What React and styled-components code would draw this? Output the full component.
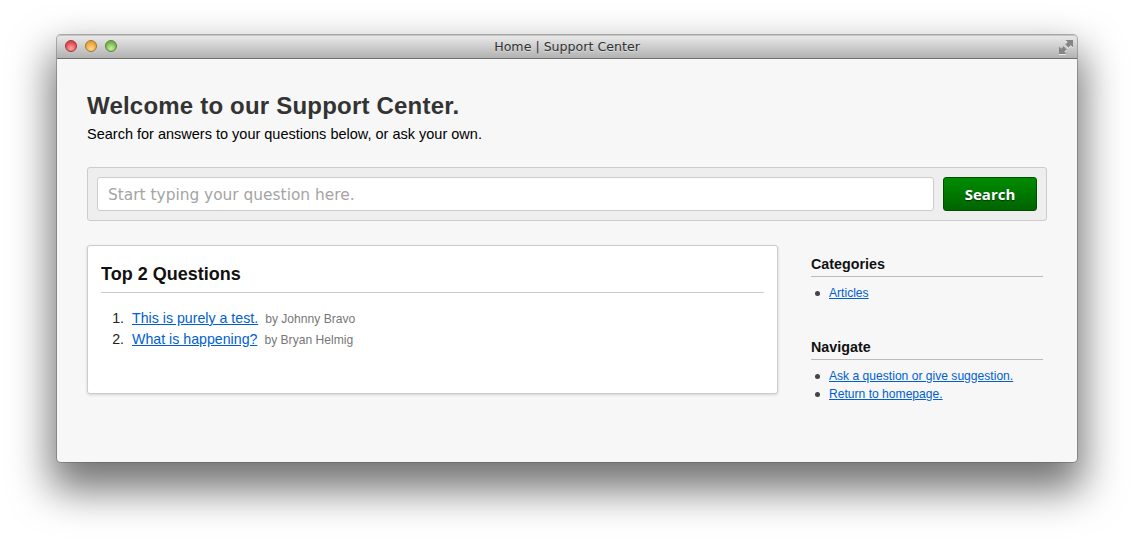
import React from "react";
import styled, { createGlobalStyle } from "styled-components";

const GlobalStyle = createGlobalStyle`
  html, body {
    margin: 0;
    padding: 0;
    background: #ffffff;
  }
  body {
    font-family: "Liberation Sans", Arial, sans-serif;
    overflow: hidden;
  }
`;

const Page = styled.div`
  width: 1134px;
  height: 541px;
  padding: 35px 0 0 57px;
  box-sizing: border-box;
  overflow: hidden;
`;

const Window = styled.div`
  width: 1020px;
  height: 427px;
  display: flex;
  flex-direction: column;
  border-radius: 4px;
  background: #f7f7f7;
  box-shadow: 0 0 0 1px rgba(90, 90, 90, 0.45), 0 22px 40px 6px rgba(0, 0, 0, 0.55);
`;

const TitleBar = styled.div`
  position: relative;
  flex: 0 0 24px;
  height: 24px;
  box-sizing: border-box;
  display: flex;
  align-items: center;
  justify-content: center;
  border-top: 1px solid #c4c4c4;
  border-bottom: 1px solid #6f6f6f;
  border-radius: 4px 4px 0 0;
  background: linear-gradient(#e8e8e8, #b2b2b2);
`;

const Lights = styled.div`
  position: absolute;
  left: 8px;
  top: 4px;
  display: flex;
  gap: 8px;
`;

const Light = styled.span`
  width: 12px;
  height: 12px;
  box-sizing: border-box;
  border-radius: 50%;
  border: 1px solid ${(props) => props.edge};
  background: radial-gradient(circle at 50% 75%, ${(props) => props.glow}, ${(props) => props.base} 70%);
`;

const WindowTitle = styled.span`
  margin-top: -2px;
  font-family: "DejaVu Sans", sans-serif;
  font-size: 12.6px;
  color: #333333;
  text-shadow: 0 1px 0 rgba(255, 255, 255, 0.4);
`;

const Expand = styled.svg`
  position: absolute;
  right: 3px;
  top: 3px;
  filter: drop-shadow(0 1px 0 rgba(255, 255, 255, 0.7));
`;

const Content = styled.div`
  flex: 1;
  padding: 33px 30px 0;
  color: #000000;
`;

const Heading = styled.h1`
  margin: 0;
  font-size: 24px;
  line-height: 28px;
  font-weight: bold;
  letter-spacing: 0.2px;
  color: #333333;
`;

const Lead = styled.p`
  margin: 4px 0 0;
  font-size: 14.5px;
  line-height: 20px;
`;

const SearchBar = styled.form`
  margin-top: 23px;
  height: 54px;
  box-sizing: border-box;
  padding: 9px;
  display: flex;
  gap: 9px;
  border: 1px solid #cccccc;
  border-radius: 3px;
  background: #eeeeee;
`;

const SearchInput = styled.input`
  flex: 1;
  min-width: 0;
  height: 34px;
  box-sizing: border-box;
  padding: 1px 10px 0;
  font-family: "DejaVu Sans", sans-serif;
  font-size: 15.4px;
  border: 1px solid #cccccc;
  border-radius: 3px;
  background: #ffffff;

  &::placeholder {
    color: #a4a4a4;
    opacity: 1;
  }
`;

const SearchButton = styled.button`
  flex: 0 0 94px;
  height: 34px;
  padding: 0;
  font-family: "Open Sans", sans-serif;
  font-size: 15px;
  font-weight: 700;
  color: #ffffff;
  text-shadow: 0 1px 1px #003300;
  border: 1px solid #004d00;
  border-radius: 3px;
  background: linear-gradient(#008c00, #006400);
`;

const Columns = styled.div`
  margin-top: 24px;
  display: flex;
  align-items: flex-start;
  justify-content: space-between;
`;

const Card = styled.section`
  width: 691px;
  height: 149px;
  box-sizing: border-box;
  padding: 16px 13px 0;
  background: #ffffff;
  border: 1px solid #cccccc;
  border-radius: 3px;
  box-shadow: 0 1px 3px rgba(0, 0, 0, 0.15);
`;

const CardTitle = styled.h2`
  margin: 0;
  padding-bottom: 5px;
  font-size: 18px;
  line-height: 25px;
  font-weight: bold;
  color: #111111;
  border-bottom: 1px solid #cccccc;
`;

const QuestionList = styled.ol`
  margin: 15px 0 0;
  padding: 0;
  list-style: none;
  counter-reset: question;
  font-size: 14.2px;
  color: #222222;
`;

const QuestionRow = styled.li`
  height: 21px;
  line-height: 21px;
  counter-increment: question;

  &::before {
    content: counter(question) ".";
    display: inline-block;
    width: 23px;
    margin-right: 8px;
    text-align: right;
  }
`;

const QuestionLink = styled.a`
  color: #0060d0;
  text-decoration: underline;
`;

const Author = styled.span`
  margin-left: 7px;
  font-size: 12.1px;
  color: #777777;
`;

const Sidebar = styled.aside`
  width: 232px;
  margin-right: 4px;
  padding-top: 10px;
  display: flex;
  flex-direction: column;
  gap: 36px;
`;

const SideBlock = styled.div`
  min-height: 46px;
`;

const SideTitle = styled.h3`
  margin: 0;
  padding-bottom: 3px;
  font-size: 14.3px;
  line-height: 18px;
  font-weight: bold;
  color: #111111;
  border-bottom: 1px solid #bbbbbb;
`;

const SideList = styled.ul`
  margin: 7px 0 0;
  padding: 0 0 0 18px;
  list-style: none;
  font-size: 12.1px;
  line-height: 18px;
`;

const SideItem = styled.li`
  position: relative;

  &::before {
    content: "";
    position: absolute;
    left: -14px;
    top: 7px;
    width: 5px;
    height: 5px;
    border-radius: 50%;
    background: #444444;
  }
`;

const App = () => {
  return (
    <Page>
      <GlobalStyle />
      <Window>
        <TitleBar>
          <Lights>
            <Light edge="#9c3438" base="#e0454c" glow="#ffa8a0" />
            <Light edge="#a47628" base="#eb9e36" glow="#ffdc90" />
            <Light edge="#54863a" base="#74b048" glow="#c8f0a0" />
          </Lights>
          <WindowTitle>Home | Support Center</WindowTitle>
          <Expand width="16" height="16" viewBox="0 0 16 16" fill="#858585">
            <path d="M7.5 1H15V8.5L12.8 6.3 10.4 8.7 7.3 5.6 9.7 3.2Z" />
            <path d="M1 7.5V15H8.5L6.3 12.8 8.7 10.4 5.6 7.3 3.2 9.7Z" />
          </Expand>
        </TitleBar>
        <Content>
          <Heading>Welcome to our Support Center.</Heading>
          <Lead>Search for answers to your questions below, or ask your own.</Lead>
          <SearchBar>
            <SearchInput placeholder="Start typing your question here." />
            <SearchButton type="button">Search</SearchButton>
          </SearchBar>
          <Columns>
            <Card>
              <CardTitle>Top 2 Questions</CardTitle>
              <QuestionList>
                <QuestionRow>
                  <QuestionLink href="#">This is purely a test.</QuestionLink>
                  <Author>by Johnny Bravo</Author>
                </QuestionRow>
                <QuestionRow>
                  <QuestionLink href="#">What is happening?</QuestionLink>
                  <Author>by Bryan Helmig</Author>
                </QuestionRow>
              </QuestionList>
            </Card>
            <Sidebar>
              <SideBlock>
                <SideTitle>Categories</SideTitle>
                <SideList>
                  <SideItem><QuestionLink href="#">Articles</QuestionLink></SideItem>
                </SideList>
              </SideBlock>
              <SideBlock>
                <SideTitle>Navigate</SideTitle>
                <SideList>
                  <SideItem><QuestionLink href="#">Ask a question or give suggestion.</QuestionLink></SideItem>
                  <SideItem><QuestionLink href="#">Return to homepage.</QuestionLink></SideItem>
                </SideList>
              </SideBlock>
            </Sidebar>
          </Columns>
        </Content>
      </Window>
    </Page>
  );
};

export default App;
